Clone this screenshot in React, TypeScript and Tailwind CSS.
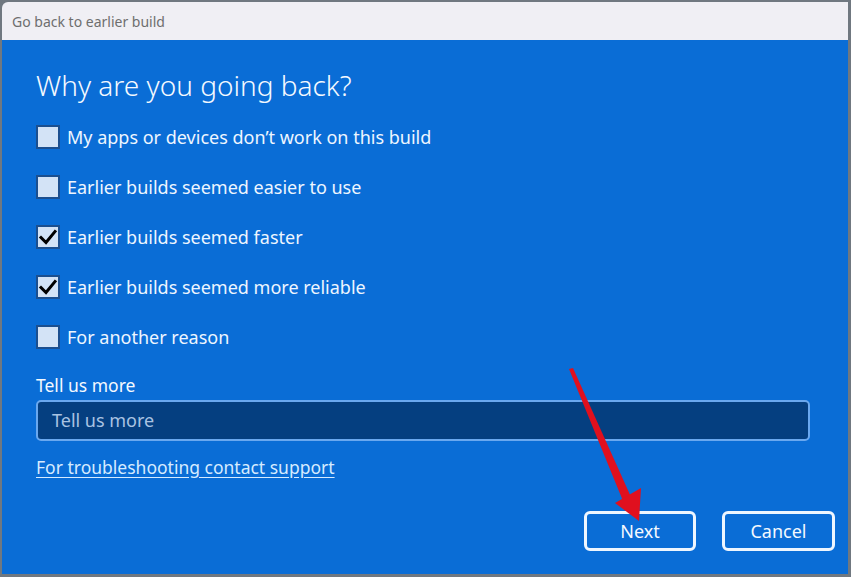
import React from "react";

const items = [
  { label: "My apps or devices don\u2019t work on this build", checked: false },
  { label: "Earlier builds seemed easier to use", checked: false },
  { label: "Earlier builds seemed faster", checked: true },
  { label: "Earlier builds seemed more reliable", checked: true },
  { label: "For another reason", checked: false },
];

function Box({ checked }: { checked: boolean }) {
  return (
    <div className="w-[24px] h-[24px] shrink-0 bg-[#d3e3f6] border-[2px] border-[#1b4f8f] flex items-center justify-center">
      {checked && (
        <svg width="20" height="20" viewBox="0 0 20 20">
          <path d="M3 10.5 L8 15.5 L17 4.5" fill="none" stroke="#000" strokeWidth="3" strokeLinecap="square" strokeLinejoin="miter" />
        </svg>
      )}
    </div>
  );
}

export default function App() {
  return (
    <div
      className="w-[851px] h-[577px] bg-[#707880] pl-[2px] pt-[2px] pr-[3px] pb-[3px] relative overflow-hidden"
      style={{ fontFamily: '"Noto Sans", "Open Sans", sans-serif' }}
    >
      <div className="w-full h-full flex flex-col rounded-tl-[6px] overflow-hidden">
        <div className="h-[38px] shrink-0 bg-[#f0eff4] flex items-center pl-[10px] text-[14px] text-[#6e6e6e]">
          Go back to earlier build
        </div>
        <div className="flex-1 bg-[#0a6dd6] text-white flex flex-col pl-[34px] pr-[13px]">
          <div className="text-[28px] font-light leading-none mt-[31px] text-[#f4f9ff]">Why are you going back?</div>
          <div className="flex flex-col mt-[26px] gap-[26px]">
            {items.map((it) => (
              <div key={it.label} className="flex items-center gap-[7px] h-[24px]">
                <Box checked={it.checked} />
                <span className="text-[18px] text-[#eef6ff] leading-none">{it.label}</span>
              </div>
            ))}
          </div>
          <div className="mt-[28px] text-[17.5px] leading-none text-[#f4f9ff]">Tell us more</div>
          <div className="mt-[5px] mr-[25px] h-[41px] rounded-[5px] border-[2px] border-[#6aa8ef] bg-[#053f80] flex items-center pl-[14px] text-[18px] text-[#a9c3e2]">
            Tell us more
          </div>
          <div className="mt-[18px] text-[17.5px] leading-none text-[#d6ebff] underline underline-offset-[3px]">
            For troubleshooting contact support
          </div>
          <div className="flex justify-end gap-[26px] mt-[35px]">
            <div className="w-[112px] h-[40px] rounded-[6px] border-[3px] border-[#eef6ff] flex items-center justify-center text-[18px] text-[#f4f9ff]">
              Next
            </div>
            <div className="w-[113px] h-[40px] rounded-[6px] border-[3px] border-[#eef6ff] flex items-center justify-center text-[18px] text-[#f4f9ff]">
              Cancel
            </div>
          </div>
        </div>
      </div>
      <svg className="absolute left-0 top-0 pointer-events-none" width="851" height="577">
        <polygon points="569,369 573,368 631,497 623,501" fill="#e0101e" />
        <polygon points="615,503 641,488 639,521" fill="#e0101e" />
      </svg>
    </div>
  );
}
